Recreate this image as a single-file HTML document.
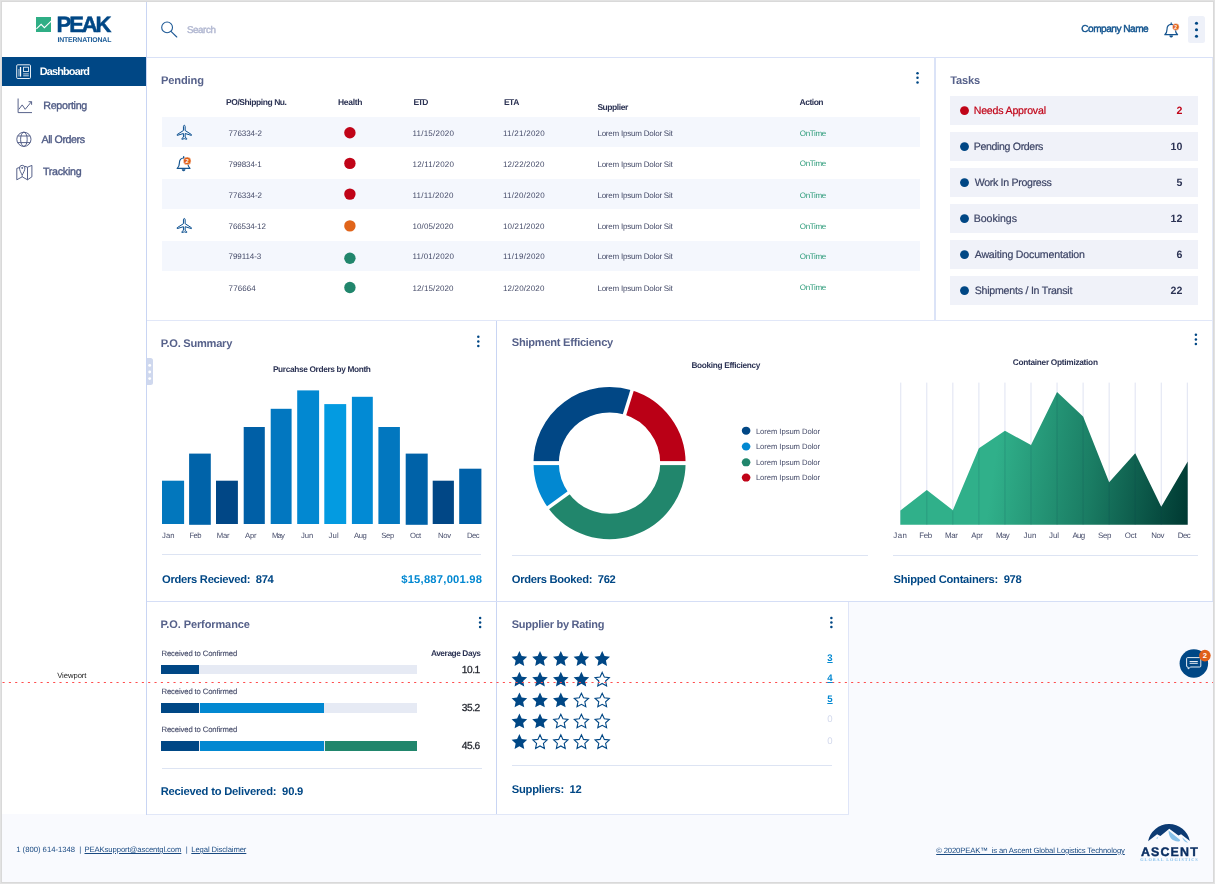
<!DOCTYPE html>
<html lang="en">
<head>
<meta charset="utf-8">
<title>PEAK International Dashboard</title>
<style>
*{box-sizing:border-box;margin:0;padding:0}
html,body{width:1215px;height:884px;overflow:hidden}
body{background:#e2e2e2;font-family:"Liberation Sans",sans-serif;color:#39405f;position:relative}
.a{position:absolute}
.t{position:absolute;white-space:pre;line-height:1;text-rendering:geometricPrecision}
#app{position:absolute;left:2px;top:2px;width:1211px;height:880px;background:#f9fafe;overflow:hidden;box-shadow:0 0 0 1px #d9d9d9}
svg{overflow:visible}
#tx{position:absolute;left:0;top:0;width:1211px;height:880px;will-change:transform}
</style>
</head>
<body>
<div id="app">

<div class="a" style="left:0px;top:0px;width:145px;height:812px;background:#fff;"></div>
<div class="a" style="left:145px;top:0px;width:1066px;height:55px;background:#fff;"></div>
<div class="a" style="left:145px;top:56px;width:1066px;height:544px;background:#fff;"></div>
<div class="a" style="left:145px;top:600px;width:701px;height:212px;background:#fff;"></div>
<div class="a" style="left:144px;top:0px;width:1px;height:813px;background:#c9d5f3;"></div>
<div class="a" style="left:494px;top:319px;width:1px;height:494px;background:#c9d5f3;"></div>
<div class="a" style="left:932px;top:56px;width:2px;height:263px;background:#dbe3f7;"></div>
<div class="a" style="left:846px;top:600px;width:1px;height:213px;background:#dfe5f8;"></div>
<div class="a" style="left:1210px;top:56px;width:1px;height:544px;background:#e3e9f9;"></div>
<div class="a" style="left:145px;top:55px;width:1066px;height:1px;background:#d9e1f7;"></div>
<div class="a" style="left:145px;top:318px;width:1066px;height:1px;background:#e1e7f8;"></div>
<div class="a" style="left:145px;top:599px;width:1066px;height:1px;background:#d5def6;"></div>
<div class="a" style="left:145px;top:812px;width:702px;height:1px;background:#e1e7f8;"></div>
<div class="a" style="left:34.4px;top:15px;width:15px;height:15.4px;background:#2fae85;"></div>
<svg class="a" style="left:-2px;top:-2px;" width="1215" height="884" viewBox="0 0 1215 884"><polyline points="36.4,28.8 41.1,24.3 44.4,27.7 51.4,20.9" fill="none" stroke="#fff" stroke-width="1.1"/></svg>
<div class="a" style="left:0px;top:55.4px;width:144px;height:28.6px;background:#004785;"></div>
<svg class="a" style="left:-2px;top:-2px;" width="1215" height="884" viewBox="0 0 1215 884"><g fill="none" stroke="#fff" stroke-width="0.9"><rect x="16.7" y="64.8" width="13.8" height="13.7" rx="1"/><rect x="23.6" y="67.2" width="4.8" height="4.4" stroke-width="0.8"/><path d="M23.2 73.9h5.6M23.2 75.8h5.6" stroke-width="0.8"/><path d="M20.5 67v9.6" stroke-width="1.3"/><path d="M18.9 69v7.6" stroke-width="1.1" stroke-opacity="0.6"/></g><g fill="none" stroke="#4e5a84" stroke-width="0.95"><path d="M18.1 98.5v14.1h13.9"/><path d="M18.8 109.4l3.4-4.5 3 4.4 6.2-7.5"/><path d="M28.6 101.7h3v3.1"/></g><g fill="none" stroke="#4e5a84" stroke-width="0.95"><circle cx="23.9" cy="139.3" r="7.1"/><ellipse cx="23.9" cy="139.3" rx="3.3" ry="7.1"/><path d="M17.6 136h12.6M17.6 142.6h12.6"/></g><g fill="none" stroke="#4e5a84" stroke-width="0.95" stroke-linejoin="round"><path d="M19.4 167.5l-2.6 0.9v11.4l5.4-3 5.3 3 4.4-3v-11.4l-4.4 1.8l-2.5-0.9"/><path d="M27.5 167.2v12.6M22.2 175.4v1.4"/><path d="M22.2 175.2c-1.2-2.6-2.7-4.9-2.7-7.2a2.7 2.7 0 0 1 5.4 0c0 2.3-1.5 4.6-2.7 7.2z"/><circle cx="22.2" cy="167.9" r="0.5" fill="#4e5a84"/></g></svg>
<svg class="a" style="left:-2px;top:-2px;" width="1215" height="884" viewBox="0 0 1215 884"><g fill="none" stroke="#1f5a96" stroke-width="1.1"><circle cx="167.1" cy="27.4" r="5.4"/><path d="M171 31.3l5.8 5.7" stroke-linecap="round"/></g></svg>
<div class="a" style="left:1185.6px;top:14.4px;width:17.6px;height:26.2px;background:#eef1f9;border-radius:2.5px"></div>
<svg class="a" style="left:-2px;top:-2px;" width="1215" height="884" viewBox="0 0 1215 884"><g fill="#004785"><circle cx="1196.5" cy="23.3" r="1.55"/><circle cx="1196.5" cy="29.8" r="1.55"/><circle cx="1196.5" cy="36.3" r="1.55"/></g></svg>
<svg class="a" style="left:-2px;top:-2px;" width="1215" height="884" viewBox="0 0 1215 884"><g transform="translate(1171.2 29.6) scale(1.0)" fill="none" stroke="#15548f" stroke-width="1.2"><path d="M-6.4 5.1c1.6-1.3 2.2-3 2.2-5.3c0-3 1.6-5.1 4.2-5.1s4.2 2.1 4.2 5.1c0 2.3 0.6 4 2.2 5.3z" stroke-linejoin="round"/><path d="M-1.5 6.1a1.5 1.5 0 0 0 3 0z" fill="#15548f" stroke-width="0.6"/><path d="M0 -5.4v-1.3" stroke-linecap="round"/><circle cx="4.6" cy="-2.7" r="3.4" fill="#e0601a" stroke="#fff" stroke-width="0.5"/><text x="4.6" y="-0.9320000000000002" font-family="Liberation Sans, sans-serif" font-size="5.1" font-weight="bold" fill="#fff" stroke="none" text-anchor="middle">2</text></g></svg>
<svg class="a" style="left:-2px;top:-2px;" width="1215" height="884" viewBox="0 0 1215 884"><g fill="#004785"><circle cx="917.5" cy="73.2" r="1.25"/><circle cx="917.5" cy="77.8" r="1.25"/><circle cx="917.5" cy="82.4" r="1.25"/></g></svg>
<div class="a" style="left:159.9px;top:114.7px;width:757.7px;height:30.1px;background:#f4f7fd;"></div>
<div class="a" style="left:159.9px;top:176.7px;width:757.7px;height:30.5px;background:#f4f7fd;"></div>
<div class="a" style="left:159.9px;top:238.7px;width:757.7px;height:30.7px;background:#f4f7fd;"></div>
<svg class="a" style="left:-2px;top:-2px;" width="1215" height="884" viewBox="0 0 1215 884"><circle cx="349.9" cy="132.7" r="5.7" fill="#c00418"/><circle cx="349.9" cy="163.4" r="5.7" fill="#c00418"/><circle cx="349.9" cy="194.1" r="5.7" fill="#c00418"/><circle cx="349.9" cy="225.9" r="5.7" fill="#e0641a"/><circle cx="349.9" cy="258.3" r="5.7" fill="#21866c"/><circle cx="349.9" cy="287.5" r="5.7" fill="#21866c"/></svg>
<svg class="a" style="left:-2px;top:-2px;" width="1215" height="884" viewBox="0 0 1215 884"><path d="M184.3 125.3c-0.65 0 -0.85 0.6 -0.85 1.3v3.9l-6.25 4v0.9l6.25-1.9v3.7l-1.55 1.2v0.9l2.4-0.65l2.4 0.65v-0.9l-1.55-1.2v-3.7l6.25 1.9v-0.9l-6.25-4v-3.9c0-0.7-0.2-1.3-0.85-1.3z" fill="none" stroke="#0a4f90" stroke-width="1.0" stroke-linejoin="round"/><path d="M184.3 218.5c-0.65 0 -0.85 0.6 -0.85 1.3v3.9l-6.25 4v0.9l6.25-1.9v3.7l-1.55 1.2v0.9l2.4-0.65l2.4 0.65v-0.9l-1.55-1.2v-3.7l6.25 1.9v-0.9l-6.25-4v-3.9c0-0.7-0.2-1.3-0.85-1.3z" fill="none" stroke="#0a4f90" stroke-width="1.0" stroke-linejoin="round"/><g transform="translate(183.6 163.3) scale(1.0)" fill="none" stroke="#15548f" stroke-width="1.2"><path d="M-6.4 5.1c1.6-1.3 2.2-3 2.2-5.3c0-3 1.6-5.1 4.2-5.1s4.2 2.1 4.2 5.1c0 2.3 0.6 4 2.2 5.3z" stroke-linejoin="round"/><path d="M-1.5 6.1a1.5 1.5 0 0 0 3 0z" fill="#15548f" stroke-width="0.6"/><path d="M0 -5.4v-1.3" stroke-linecap="round"/><circle cx="3.6" cy="-2.4" r="3.9" fill="#e0601a" stroke="#fff" stroke-width="0.5"/><text x="3.6" y="-0.3719999999999999" font-family="Liberation Sans, sans-serif" font-size="5.85" font-weight="bold" fill="#fff" stroke="none" text-anchor="middle">2</text></g></svg>
<div class="a" style="left:947.9px;top:94px;width:247.9px;height:29px;background:#f0f2f9;"></div>
<div class="a" style="left:947.9px;top:130px;width:247.9px;height:29px;background:#f0f2f9;"></div>
<div class="a" style="left:947.9px;top:166px;width:247.9px;height:29px;background:#f0f2f9;"></div>
<div class="a" style="left:947.9px;top:202px;width:247.9px;height:29px;background:#f0f2f9;"></div>
<div class="a" style="left:947.9px;top:238px;width:247.9px;height:29px;background:#f0f2f9;"></div>
<div class="a" style="left:947.9px;top:274px;width:247.9px;height:29px;background:#f0f2f9;"></div>
<svg class="a" style="left:-2px;top:-2px;" width="1215" height="884" viewBox="0 0 1215 884"><circle cx="964.5" cy="110.6" r="4.45" fill="#c00418"/><circle cx="964.5" cy="146.6" r="4.45" fill="#004785"/><circle cx="964.5" cy="182.6" r="4.45" fill="#004785"/><circle cx="964.5" cy="218.6" r="4.45" fill="#004785"/><circle cx="964.5" cy="254.6" r="4.45" fill="#004785"/><circle cx="964.5" cy="290.6" r="4.45" fill="#004785"/></svg>
<svg class="a" style="left:-2px;top:-2px;" width="1215" height="884" viewBox="0 0 1215 884"><g fill="#004785"><circle cx="478.3" cy="336.8" r="1.25"/><circle cx="478.3" cy="341.4" r="1.25"/><circle cx="478.3" cy="346.0" r="1.25"/></g></svg>
<div class="a" style="left:145px;top:356.3px;width:5.9px;height:27.1px;background:#cfd8ee;border-radius:0 2.5px 2.5px 0"></div>
<svg class="a" style="left:-2px;top:-2px;" width="1215" height="884" viewBox="0 0 1215 884"><g fill="#fff"><circle cx="149.7" cy="365.4" r="1.45"/><circle cx="149.7" cy="372" r="1.45"/><circle cx="149.7" cy="378.6" r="1.45"/></g></svg>
<svg class="a" style="left:-2px;top:-2px;" width="1215" height="884" viewBox="0 0 1215 884"><rect x="162.0" y="480.7" width="22.1" height="43.3" fill="#0277bd"/><rect x="189.1" y="453.6" width="21.7" height="71.2" fill="#0063a9"/><rect x="216.0" y="480.7" width="21.9" height="43.3" fill="#014786"/><rect x="243.7" y="427.0" width="21.1" height="97.0" fill="#005fa6"/><rect x="270.7" y="408.8" width="20.9" height="115.2" fill="#0277c0"/><rect x="297.2" y="390.4" width="21.9" height="133.6" fill="#0288d1"/><rect x="324.3" y="404.1" width="21.9" height="119.9" fill="#039be1"/><rect x="351.9" y="396.8" width="20.9" height="127.2" fill="#028ad4"/><rect x="378.4" y="427.0" width="21.5" height="97.0" fill="#0277bf"/><rect x="405.7" y="453.6" width="22.0" height="71.2" fill="#0062a8"/><rect x="432.7" y="480.7" width="21.2" height="43.3" fill="#014786"/><rect x="459.2" y="468.7" width="22.2" height="55.3" fill="#0061a9"/></svg>
<div class="a" style="left:159.5px;top:552.3px;width:319.9px;height:1px;background:#dde4f3;"></div>
<svg class="a" style="left:-2px;top:-2px;" width="1215" height="884" viewBox="0 0 1215 884"><g fill="#004785"><circle cx="1195.9" cy="334.8" r="1.25"/><circle cx="1195.9" cy="339.4" r="1.25"/><circle cx="1195.9" cy="344.0" r="1.25"/></g></svg>
<svg class="a" style="left:-2px;top:-2px;" width="1215" height="884" viewBox="0 0 1215 884"><path d="M546.17 463.10 A63.375 63.375 0 0 1 628.08 402.49" fill="none" stroke="#014785" stroke-width="25.35"/><path d="M628.08 402.49 A63.375 63.375 0 0 1 672.92 463.10" fill="none" stroke="#ba0016" stroke-width="25.35"/><path d="M672.92 463.10 A63.375 63.375 0 0 1 558.28 500.35" fill="none" stroke="#21866c" stroke-width="25.35"/><path d="M558.28 500.35 A63.375 63.375 0 0 1 546.17 463.10" fill="none" stroke="#0288d1" stroke-width="25.35"/><line x1="623.95" y1="416.58" x2="632.63" y2="388.54" stroke="#fff" stroke-width="3.5"/><line x1="658.25" y1="463.10" x2="687.60" y2="463.10" stroke="#fff" stroke-width="4.0"/><line x1="570.15" y1="491.73" x2="546.41" y2="508.98" stroke="#fff" stroke-width="3.5"/><line x1="560.85" y1="463.10" x2="531.50" y2="463.10" stroke="#fff" stroke-width="4.0"/></svg>
<svg class="a" style="left:-2px;top:-2px;" width="1215" height="884" viewBox="0 0 1215 884"><ellipse cx="746.1" cy="430.7" rx="4.3" ry="4.0" fill="#014785"/><ellipse cx="746.1" cy="446.5" rx="4.3" ry="4.0" fill="#0288d1"/><ellipse cx="746.1" cy="462.3" rx="4.3" ry="4.0" fill="#21866c"/><ellipse cx="746.1" cy="477.6" rx="4.3" ry="4.0" fill="#c00418"/></svg>
<div class="a" style="left:509.8px;top:552.8px;width:356.3px;height:1px;background:#dde4f3;"></div>
<svg class="a" style="left:-2px;top:-2px;" width="1215" height="884" viewBox="0 0 1215 884"><defs><linearGradient id="cg" gradientUnits="userSpaceOnUse" x1="996" y1="452" x2="1192" y2="480"><stop offset="0" stop-color="#30b08a"/><stop offset="0.5" stop-color="#1a7c63"/><stop offset="1" stop-color="#003a33"/></linearGradient></defs><line x1="900.75" y1="382.6" x2="900.75" y2="524.7" stroke="#dfe3f2" stroke-width="1"/><line x1="926.80" y1="382.6" x2="926.80" y2="524.7" stroke="#dfe3f2" stroke-width="1"/><line x1="952.85" y1="382.6" x2="952.85" y2="524.7" stroke="#dfe3f2" stroke-width="1"/><line x1="978.90" y1="382.6" x2="978.90" y2="524.7" stroke="#dfe3f2" stroke-width="1"/><line x1="1004.95" y1="382.6" x2="1004.95" y2="524.7" stroke="#dfe3f2" stroke-width="1"/><line x1="1031.00" y1="382.6" x2="1031.00" y2="524.7" stroke="#dfe3f2" stroke-width="1"/><line x1="1057.05" y1="382.6" x2="1057.05" y2="524.7" stroke="#dfe3f2" stroke-width="1"/><line x1="1083.10" y1="382.6" x2="1083.10" y2="524.7" stroke="#dfe3f2" stroke-width="1"/><line x1="1109.15" y1="382.6" x2="1109.15" y2="524.7" stroke="#dfe3f2" stroke-width="1"/><line x1="1135.20" y1="382.6" x2="1135.20" y2="524.7" stroke="#dfe3f2" stroke-width="1"/><line x1="1161.25" y1="382.6" x2="1161.25" y2="524.7" stroke="#dfe3f2" stroke-width="1"/><line x1="1187.30" y1="382.6" x2="1187.30" y2="524.7" stroke="#dfe3f2" stroke-width="1"/><polygon points="900.35,524.7 900.35,510.5 900.75,510.2 926.80,489.9 952.85,510.2 978.90,448.3 1004.95,430.7 1031.00,445.1 1057.05,392.1 1083.10,416.5 1109.15,482.3 1135.20,453.2 1161.25,506.7 1187.30,462.2 1187.70,461.6 1187.70,524.7" fill="url(#cg)"/><line x1="926.80" y1="490.9" x2="926.80" y2="524.7" stroke="#0a3a4a" stroke-opacity="0.18" stroke-width="0.9"/><line x1="952.85" y1="511.2" x2="952.85" y2="524.7" stroke="#0a3a4a" stroke-opacity="0.18" stroke-width="0.9"/><line x1="978.90" y1="449.3" x2="978.90" y2="524.7" stroke="#0a3a4a" stroke-opacity="0.18" stroke-width="0.9"/><line x1="1004.95" y1="431.7" x2="1004.95" y2="524.7" stroke="#0a3a4a" stroke-opacity="0.18" stroke-width="0.9"/><line x1="1031.00" y1="446.1" x2="1031.00" y2="524.7" stroke="#0a3a4a" stroke-opacity="0.18" stroke-width="0.9"/><line x1="1057.05" y1="393.1" x2="1057.05" y2="524.7" stroke="#0a3a4a" stroke-opacity="0.18" stroke-width="0.9"/><line x1="1083.10" y1="417.5" x2="1083.10" y2="524.7" stroke="#0a3a4a" stroke-opacity="0.18" stroke-width="0.9"/><line x1="1109.15" y1="483.3" x2="1109.15" y2="524.7" stroke="#0a3a4a" stroke-opacity="0.18" stroke-width="0.9"/><line x1="1135.20" y1="454.2" x2="1135.20" y2="524.7" stroke="#0a3a4a" stroke-opacity="0.18" stroke-width="0.9"/><line x1="1161.25" y1="507.7" x2="1161.25" y2="524.7" stroke="#0a3a4a" stroke-opacity="0.18" stroke-width="0.9"/></svg>
<div class="a" style="left:891.3px;top:552.8px;width:304.5px;height:1px;background:#dde4f3;"></div>
<svg class="a" style="left:-2px;top:-2px;" width="1215" height="884" viewBox="0 0 1215 884"><g fill="#004785"><circle cx="480.1" cy="618.1" r="1.25"/><circle cx="480.1" cy="622.5" r="1.25"/><circle cx="480.1" cy="627.0" r="1.25"/></g></svg>
<div class="a" style="left:159.4px;top:662.7px;width:255.7px;height:9.8px;background:#e6eaf4;"></div>
<div class="a" style="left:159.4px;top:662.7px;width:37.2px;height:9.8px;background:#004785;"></div>
<div class="a" style="left:159.4px;top:701.2px;width:255.7px;height:9.8px;background:#e6eaf4;"></div>
<div class="a" style="left:159.4px;top:701.2px;width:37.2px;height:9.8px;background:#004785;"></div>
<div class="a" style="left:198.0px;top:701.2px;width:123.8px;height:9.8px;background:#0288d1;"></div>
<div class="a" style="left:159.4px;top:738.9px;width:255.7px;height:9.8px;background:#e6eaf4;"></div>
<div class="a" style="left:159.4px;top:738.9px;width:37.2px;height:9.8px;background:#004785;"></div>
<div class="a" style="left:198.0px;top:738.9px;width:123.8px;height:9.8px;background:#0288d1;"></div>
<div class="a" style="left:323.2px;top:738.9px;width:91.9px;height:9.8px;background:#21866c;"></div>
<div class="a" style="left:159.7px;top:766px;width:320.5px;height:1px;background:#dde4f3;"></div>
<svg class="a" style="left:-2px;top:-2px;" width="1215" height="884" viewBox="0 0 1215 884"><g fill="#004785"><circle cx="831.4" cy="618.1" r="1.25"/><circle cx="831.4" cy="622.6" r="1.25"/><circle cx="831.4" cy="627.1" r="1.25"/></g></svg>
<svg class="a" style="left:-2px;top:-2px;" width="1215" height="884" viewBox="0 0 1215 884"><polygon points="519.40,651.10 521.71,656.12 527.20,656.77 523.14,660.52 524.22,665.93 519.40,663.24 514.58,665.93 515.66,660.52 511.60,656.77 517.09,656.12" fill="#004785"/><polygon points="540.00,651.10 542.31,656.12 547.80,656.77 543.74,660.52 544.82,665.93 540.00,663.24 535.18,665.93 536.26,660.52 532.20,656.77 537.69,656.12" fill="#004785"/><polygon points="560.80,651.10 563.11,656.12 568.60,656.77 564.54,660.52 565.62,665.93 560.80,663.24 555.98,665.93 557.06,660.52 553.00,656.77 558.49,656.12" fill="#004785"/><polygon points="581.40,651.10 583.71,656.12 589.20,656.77 585.14,660.52 586.22,665.93 581.40,663.24 576.58,665.93 577.66,660.52 573.60,656.77 579.09,656.12" fill="#004785"/><polygon points="602.20,651.10 604.51,656.12 610.00,656.77 605.94,660.52 607.02,665.93 602.20,663.24 597.38,665.93 598.46,660.52 594.40,656.77 599.89,656.12" fill="#004785"/><polygon points="519.40,671.70 521.71,676.72 527.20,677.37 523.14,681.12 524.22,686.53 519.40,683.84 514.58,686.53 515.66,681.12 511.60,677.37 517.09,676.72" fill="#004785"/><polygon points="540.00,671.70 542.31,676.72 547.80,677.37 543.74,681.12 544.82,686.53 540.00,683.84 535.18,686.53 536.26,681.12 532.20,677.37 537.69,676.72" fill="#004785"/><polygon points="560.80,671.70 563.11,676.72 568.60,677.37 564.54,681.12 565.62,686.53 560.80,683.84 555.98,686.53 557.06,681.12 553.00,677.37 558.49,676.72" fill="#004785"/><polygon points="581.40,671.70 583.71,676.72 589.20,677.37 585.14,681.12 586.22,686.53 581.40,683.84 576.58,686.53 577.66,681.12 573.60,677.37 579.09,676.72" fill="#004785"/><polygon points="602.20,672.40 604.32,676.99 609.33,677.58 605.62,681.01 606.61,685.97 602.20,683.50 597.79,685.97 598.78,681.01 595.07,677.58 600.08,676.99" fill="#fff" stroke="#004785" stroke-width="1.1" stroke-linejoin="miter"/><polygon points="519.40,692.50 521.71,697.52 527.20,698.17 523.14,701.92 524.22,707.33 519.40,704.64 514.58,707.33 515.66,701.92 511.60,698.17 517.09,697.52" fill="#004785"/><polygon points="540.00,692.50 542.31,697.52 547.80,698.17 543.74,701.92 544.82,707.33 540.00,704.64 535.18,707.33 536.26,701.92 532.20,698.17 537.69,697.52" fill="#004785"/><polygon points="560.80,692.50 563.11,697.52 568.60,698.17 564.54,701.92 565.62,707.33 560.80,704.64 555.98,707.33 557.06,701.92 553.00,698.17 558.49,697.52" fill="#004785"/><polygon points="581.40,693.20 583.52,697.79 588.53,698.38 584.82,701.81 585.81,706.77 581.40,704.30 576.99,706.77 577.98,701.81 574.27,698.38 579.28,697.79" fill="#fff" stroke="#004785" stroke-width="1.1" stroke-linejoin="miter"/><polygon points="602.20,693.20 604.32,697.79 609.33,698.38 605.62,701.81 606.61,706.77 602.20,704.30 597.79,706.77 598.78,701.81 595.07,698.38 600.08,697.79" fill="#fff" stroke="#004785" stroke-width="1.1" stroke-linejoin="miter"/><polygon points="519.40,713.50 521.71,718.52 527.20,719.17 523.14,722.92 524.22,728.33 519.40,725.64 514.58,728.33 515.66,722.92 511.60,719.17 517.09,718.52" fill="#004785"/><polygon points="540.00,713.50 542.31,718.52 547.80,719.17 543.74,722.92 544.82,728.33 540.00,725.64 535.18,728.33 536.26,722.92 532.20,719.17 537.69,718.52" fill="#004785"/><polygon points="560.80,714.20 562.92,718.79 567.93,719.38 564.22,722.81 565.21,727.77 560.80,725.30 556.39,727.77 557.38,722.81 553.67,719.38 558.68,718.79" fill="#fff" stroke="#004785" stroke-width="1.1" stroke-linejoin="miter"/><polygon points="581.40,714.20 583.52,718.79 588.53,719.38 584.82,722.81 585.81,727.77 581.40,725.30 576.99,727.77 577.98,722.81 574.27,719.38 579.28,718.79" fill="#fff" stroke="#004785" stroke-width="1.1" stroke-linejoin="miter"/><polygon points="602.20,714.20 604.32,718.79 609.33,719.38 605.62,722.81 606.61,727.77 602.20,725.30 597.79,727.77 598.78,722.81 595.07,719.38 600.08,718.79" fill="#fff" stroke="#004785" stroke-width="1.1" stroke-linejoin="miter"/><polygon points="519.40,734.10 521.71,739.12 527.20,739.77 523.14,743.52 524.22,748.93 519.40,746.24 514.58,748.93 515.66,743.52 511.60,739.77 517.09,739.12" fill="#004785"/><polygon points="540.00,734.80 542.12,739.39 547.13,739.98 543.42,743.41 544.41,748.37 540.00,745.90 535.59,748.37 536.58,743.41 532.87,739.98 537.88,739.39" fill="#fff" stroke="#004785" stroke-width="1.1" stroke-linejoin="miter"/><polygon points="560.80,734.80 562.92,739.39 567.93,739.98 564.22,743.41 565.21,748.37 560.80,745.90 556.39,748.37 557.38,743.41 553.67,739.98 558.68,739.39" fill="#fff" stroke="#004785" stroke-width="1.1" stroke-linejoin="miter"/><polygon points="581.40,734.80 583.52,739.39 588.53,739.98 584.82,743.41 585.81,748.37 581.40,745.90 576.99,748.37 577.98,743.41 574.27,739.98 579.28,739.39" fill="#fff" stroke="#004785" stroke-width="1.1" stroke-linejoin="miter"/><polygon points="602.20,734.80 604.32,739.39 609.33,739.98 605.62,743.41 606.61,748.37 602.20,745.90 597.79,748.37 598.78,743.41 595.07,739.98 600.08,739.39" fill="#fff" stroke="#004785" stroke-width="1.1" stroke-linejoin="miter"/></svg>
<div class="a" style="left:509.8px;top:763.2px;width:320.5px;height:1px;background:#dde4f3;"></div>
<svg class="a" style="left:-2px;top:-2px;" width="1215" height="884" viewBox="0 0 1215 884"><path d="M1148.1 841.3A21.3 21.3 0 0 1 1189.9 841.1L1181.1 834.3L1178.4 835.5L1169.3 828.7L1160.4 836.1L1157.1 834.3Z" fill="#0c3a73"/><path d="M1168.6 830.6L1179.6 839.6C1180.4 840.3 1180.3 841.3 1179 841.4C1172.5 841.8 1168.4 837.5 1168.6 830.6Z" fill="#86c0e9"/><path d="M1182.2 837.2L1188.2 842.8C1185.5 842.4 1183.2 840.6 1182.2 837.2Z" fill="#86c0e9"/><path d="M1156.3 838.2L1158.4 836.4L1157.2 838.9Z" fill="#86c0e9"/></svg>
<svg class="a" style="left:-2px;top:-2px;" width="1215" height="884" viewBox="0 0 1215 884"><line x1="2.5" y1="682.5" x2="1213" y2="682.5" stroke="#ff4d4d" stroke-width="1.1" stroke-dasharray="2.1 4.233"/></svg>
<svg class="a" style="left:-2px;top:-2px;" width="1215" height="884" viewBox="0 0 1215 884"><circle cx="1193.85" cy="663.5" r="14.25" fill="#004785"/><g fill="none" stroke="#fff" stroke-width="0.9" stroke-linejoin="round"><path d="M1187.6 657.6h12.2a1 1 0 0 1 1 1v7.4a1 1 0 0 1 -1 1h-9.1l-2.5 1.9v-1.9h-0.6a1 1 0 0 1 -1 -1v-7.4a1 1 0 0 1 1 -1z"/><path d="M1189.6 661.5h8.2M1189.6 663.3h8.2"/></g><circle cx="1204.9" cy="655.6" r="5.8" fill="#e0601a"/><text x="1204.9" y="658.3" font-family="Liberation Sans, sans-serif" font-size="7.6" font-weight="bold" fill="#fff" text-anchor="middle">2</text></svg>

<div id="tx">
<div class="t" style="left:54.60px;top:12px;font-size:22.1px;color:#004785;font-weight:bold;letter-spacing:-2.167px;-webkit-text-stroke:0.5px #004785;">PEAK</div>
<div class="t" style="left:55.40px;top:36px;font-size:6.9px;color:#1a5a96;font-weight:bold;letter-spacing:-0.150px;">INTERNATIONAL</div>
<div class="t" style="left:37.70px;top:65px;font-size:10.9px;color:#fff;font-weight:bold;letter-spacing:-0.825px;">Dashboard</div>
<div class="t" style="left:41.30px;top:99px;font-size:10.7px;color:#4e5a84;letter-spacing:-0.300px;-webkit-text-stroke:0.35px #4e5a84;">Reporting</div>
<div class="t" style="left:39.50px;top:133px;font-size:10.7px;color:#4e5a84;letter-spacing:-0.444px;-webkit-text-stroke:0.35px #4e5a84;">All Orders</div>
<div class="t" style="left:41.00px;top:165px;font-size:10.7px;color:#4e5a84;letter-spacing:-0.286px;-webkit-text-stroke:0.35px #4e5a84;">Tracking</div>
<div class="t" style="left:185.00px;top:24px;font-size:9.8px;color:#b3b9d2;letter-spacing:-0.440px;-webkit-text-stroke:0.45px #b3b9d2;">Search</div>
<div class="t" style="left:1079.30px;top:23px;font-size:10.1px;color:#14558f;letter-spacing:-0.500px;-webkit-text-stroke:0.45px #14558f;">Company Name</div>
<div class="t" style="left:158.90px;top:74px;font-size:11.1px;color:#56618a;font-weight:bold;letter-spacing:-0.100px;">Pending</div>
<div class="t" style="left:224.00px;top:96px;font-size:8.5px;color:#2c3354;font-weight:bold;letter-spacing:-0.436px;">PO/Shipping Nu.</div>
<div class="t" style="left:336.00px;top:96px;font-size:8.5px;color:#2c3354;font-weight:bold;letter-spacing:-0.320px;">Health</div>
<div class="t" style="left:411.50px;top:96px;font-size:8.5px;color:#2c3354;font-weight:bold;letter-spacing:-1.100px;">ETD</div>
<div class="t" style="left:502.00px;top:96px;font-size:8.5px;color:#2c3354;font-weight:bold;letter-spacing:-0.550px;">ETA</div>
<div class="t" style="left:595.40px;top:101px;font-size:8.5px;color:#2c3354;font-weight:bold;letter-spacing:-0.443px;">Supplier</div>
<div class="t" style="left:797.50px;top:96px;font-size:8.5px;color:#2c3354;font-weight:bold;letter-spacing:-0.480px;">Action</div>
<div class="t" style="left:226.60px;top:128px;font-size:8.0px;color:#444a68;letter-spacing:-0.057px;">776334-2</div>
<div class="t" style="left:410.50px;top:128px;font-size:8.0px;color:#444a68;letter-spacing:0.222px;">11/15/2020</div>
<div class="t" style="left:501.00px;top:128px;font-size:8.0px;color:#444a68;letter-spacing:0.256px;">11/21/2020</div>
<div class="t" style="left:595.40px;top:128px;font-size:8.0px;color:#444a68;letter-spacing:-0.210px;">Lorem Ipsum Dolor Sit</div>
<div class="t" style="left:797.80px;top:128px;font-size:8.0px;color:#2a9a78;letter-spacing:-0.340px;">OnTime</div>
<div class="t" style="left:226.60px;top:159px;font-size:8.0px;color:#444a68;letter-spacing:-0.086px;">799834-1</div>
<div class="t" style="left:410.50px;top:159px;font-size:8.0px;color:#444a68;letter-spacing:0.222px;">12/11/2020</div>
<div class="t" style="left:501.00px;top:159px;font-size:8.0px;color:#444a68;letter-spacing:0.144px;">12/22/2020</div>
<div class="t" style="left:595.40px;top:159px;font-size:8.0px;color:#444a68;letter-spacing:-0.210px;">Lorem Ipsum Dolor Sit</div>
<div class="t" style="left:797.80px;top:158px;font-size:8.0px;color:#2a9a78;letter-spacing:-0.340px;">OnTime</div>
<div class="t" style="left:226.60px;top:190px;font-size:8.0px;color:#444a68;letter-spacing:-0.057px;">776334-2</div>
<div class="t" style="left:410.50px;top:190px;font-size:8.0px;color:#444a68;letter-spacing:0.222px;">11/11/2020</div>
<div class="t" style="left:501.00px;top:190px;font-size:8.0px;color:#444a68;letter-spacing:0.256px;">11/20/2020</div>
<div class="t" style="left:595.40px;top:190px;font-size:8.0px;color:#444a68;letter-spacing:-0.210px;">Lorem Ipsum Dolor Sit</div>
<div class="t" style="left:797.80px;top:190px;font-size:8.0px;color:#2a9a78;letter-spacing:-0.340px;">OnTime</div>
<div class="t" style="left:226.60px;top:221px;font-size:8.0px;color:#444a68;letter-spacing:-0.125px;">766534-12</div>
<div class="t" style="left:410.50px;top:221px;font-size:8.0px;color:#444a68;letter-spacing:0.111px;">10/05/2020</div>
<div class="t" style="left:501.00px;top:221px;font-size:8.0px;color:#444a68;letter-spacing:0.144px;">10/21/2020</div>
<div class="t" style="left:595.40px;top:221px;font-size:8.0px;color:#444a68;letter-spacing:-0.210px;">Lorem Ipsum Dolor Sit</div>
<div class="t" style="left:797.80px;top:221px;font-size:8.0px;color:#2a9a78;letter-spacing:-0.340px;">OnTime</div>
<div class="t" style="left:226.60px;top:251px;font-size:8.0px;color:#444a68;letter-spacing:-0.086px;">799114-3</div>
<div class="t" style="left:410.50px;top:251px;font-size:8.0px;color:#444a68;letter-spacing:0.222px;">11/01/2020</div>
<div class="t" style="left:501.00px;top:251px;font-size:8.0px;color:#444a68;letter-spacing:0.256px;">11/19/2020</div>
<div class="t" style="left:595.40px;top:251px;font-size:8.0px;color:#444a68;letter-spacing:-0.210px;">Lorem Ipsum Dolor Sit</div>
<div class="t" style="left:797.80px;top:251px;font-size:8.0px;color:#2a9a78;letter-spacing:-0.340px;">OnTime</div>
<div class="t" style="left:226.60px;top:283px;font-size:8.0px;color:#444a68;letter-spacing:0.100px;">776664</div>
<div class="t" style="left:410.50px;top:283px;font-size:8.0px;color:#444a68;letter-spacing:0.111px;">12/15/2020</div>
<div class="t" style="left:501.00px;top:283px;font-size:8.0px;color:#444a68;letter-spacing:0.144px;">12/20/2020</div>
<div class="t" style="left:595.40px;top:283px;font-size:8.0px;color:#444a68;letter-spacing:-0.210px;">Lorem Ipsum Dolor Sit</div>
<div class="t" style="left:797.80px;top:282px;font-size:8.0px;color:#2a9a78;letter-spacing:-0.340px;">OnTime</div>
<div class="t" style="left:948.20px;top:74px;font-size:11.1px;color:#56618a;font-weight:bold;letter-spacing:-0.150px;">Tasks</div>
<div class="t" style="left:971.70px;top:104px;font-size:10.6px;color:#c00418;letter-spacing:-0.192px;-webkit-text-stroke:0.2px #c00418;">Needs Approval</div>
<div class="t" style="left:1174.60px;top:104px;font-size:10.6px;color:#c00418;font-weight:bold;">2</div>
<div class="t" style="left:971.70px;top:140px;font-size:10.6px;color:#3d4566;letter-spacing:-0.346px;-webkit-text-stroke:0.2px #3d4566;">Pending Orders</div>
<div class="t" style="left:1168.60px;top:140px;font-size:10.6px;color:#2c3354;font-weight:bold;">10</div>
<div class="t" style="left:972.70px;top:176px;font-size:10.6px;color:#3d4566;letter-spacing:-0.307px;-webkit-text-stroke:0.2px #3d4566;">Work In Progress</div>
<div class="t" style="left:1174.60px;top:176px;font-size:10.6px;color:#2c3354;font-weight:bold;">5</div>
<div class="t" style="left:971.70px;top:212px;font-size:10.6px;color:#3d4566;letter-spacing:-0.043px;-webkit-text-stroke:0.2px #3d4566;">Bookings</div>
<div class="t" style="left:1168.60px;top:212px;font-size:10.6px;color:#2c3354;font-weight:bold;">12</div>
<div class="t" style="left:972.70px;top:248px;font-size:10.6px;color:#3d4566;letter-spacing:-0.181px;-webkit-text-stroke:0.2px #3d4566;">Awaiting Documentation</div>
<div class="t" style="left:1174.60px;top:248px;font-size:10.6px;color:#2c3354;font-weight:bold;">6</div>
<div class="t" style="left:972.70px;top:284px;font-size:10.6px;color:#3d4566;letter-spacing:-0.224px;-webkit-text-stroke:0.2px #3d4566;">Shipments / In Transit</div>
<div class="t" style="left:1168.60px;top:284px;font-size:10.6px;color:#2c3354;font-weight:bold;">22</div>
<div class="t" style="left:158.80px;top:337px;font-size:11.1px;color:#56618a;font-weight:bold;letter-spacing:-0.264px;">P.O. Summary</div>
<div class="t" style="left:270.90px;top:363px;font-size:8.3px;color:#2c3354;font-weight:bold;letter-spacing:-0.348px;">Purcahse Orders by Month</div>
<div class="t" style="left:160.10px;top:530px;font-size:7.7px;color:#474d6b;letter-spacing:0.050px;">Jan</div>
<div class="t" style="left:187.50px;top:530px;font-size:7.7px;color:#474d6b;letter-spacing:-0.600px;">Feb</div>
<div class="t" style="left:214.80px;top:530px;font-size:7.7px;color:#474d6b;letter-spacing:-0.300px;">Mar</div>
<div class="t" style="left:243.00px;top:530px;font-size:7.7px;color:#474d6b;letter-spacing:-0.200px;">Apr</div>
<div class="t" style="left:269.90px;top:530px;font-size:7.7px;color:#474d6b;letter-spacing:-0.750px;">May</div>
<div class="t" style="left:299.00px;top:530px;font-size:7.7px;color:#474d6b;">Jun</div>
<div class="t" style="left:326.60px;top:530px;font-size:7.7px;color:#474d6b;letter-spacing:0.100px;">Jul</div>
<div class="t" style="left:352.00px;top:530px;font-size:7.7px;color:#474d6b;letter-spacing:-0.500px;">Aug</div>
<div class="t" style="left:379.20px;top:530px;font-size:7.7px;color:#474d6b;letter-spacing:-0.300px;">Sep</div>
<div class="t" style="left:408.10px;top:530px;font-size:7.7px;color:#474d6b;letter-spacing:-0.500px;">Oct</div>
<div class="t" style="left:436.00px;top:530px;font-size:7.7px;color:#474d6b;letter-spacing:-0.350px;">Nov</div>
<div class="t" style="left:464.90px;top:530px;font-size:7.7px;color:#474d6b;letter-spacing:-0.450px;">Dec</div>
<div class="t" style="left:160.10px;top:573px;font-size:11.2px;color:#004785;font-weight:bold;letter-spacing:-0.290px;">Orders Recieved:  874</div>
<div class="t" style="left:399.20px;top:573px;font-size:11.2px;color:#0288d1;font-weight:bold;letter-spacing:0.238px;">$15,887,001.98</div>
<div class="t" style="left:509.80px;top:336px;font-size:11.1px;color:#56618a;font-weight:bold;letter-spacing:-0.256px;">Shipment Efficiency</div>
<div class="t" style="left:689.40px;top:359px;font-size:8.3px;color:#2c3354;font-weight:bold;letter-spacing:-0.335px;">Booking Efficiency</div>
<div class="t" style="left:753.90px;top:426px;font-size:7.7px;color:#444a68;letter-spacing:-0.075px;">Lorem Ipsum Dolor</div>
<div class="t" style="left:753.90px;top:441px;font-size:7.7px;color:#444a68;letter-spacing:-0.075px;">Lorem Ipsum Dolor</div>
<div class="t" style="left:753.90px;top:457px;font-size:7.7px;color:#444a68;letter-spacing:-0.075px;">Lorem Ipsum Dolor</div>
<div class="t" style="left:753.90px;top:472px;font-size:7.7px;color:#444a68;letter-spacing:-0.075px;">Lorem Ipsum Dolor</div>
<div class="t" style="left:509.80px;top:573px;font-size:11.2px;color:#004785;font-weight:bold;letter-spacing:-0.300px;">Orders Booked:  762</div>
<div class="t" style="left:1010.70px;top:356px;font-size:8.3px;color:#2c3354;font-weight:bold;letter-spacing:-0.286px;">Container Optimization</div>
<div class="t" style="left:891.30px;top:530px;font-size:7.9px;color:#474d6b;letter-spacing:0.450px;">Jan</div>
<div class="t" style="left:917.20px;top:530px;font-size:7.9px;color:#474d6b;letter-spacing:-0.350px;">Feb</div>
<div class="t" style="left:943.00px;top:530px;font-size:7.9px;color:#474d6b;letter-spacing:-0.300px;">Mar</div>
<div class="t" style="left:969.20px;top:530px;font-size:7.9px;color:#474d6b;letter-spacing:-0.300px;">Apr</div>
<div class="t" style="left:994.00px;top:530px;font-size:7.9px;color:#474d6b;letter-spacing:-0.600px;">May</div>
<div class="t" style="left:1021.40px;top:530px;font-size:7.9px;color:#474d6b;letter-spacing:0.150px;">Jun</div>
<div class="t" style="left:1047.00px;top:530px;font-size:7.9px;color:#474d6b;">Jul</div>
<div class="t" style="left:1070.50px;top:530px;font-size:7.9px;color:#474d6b;letter-spacing:-0.650px;">Aug</div>
<div class="t" style="left:1096.00px;top:530px;font-size:7.9px;color:#474d6b;letter-spacing:-0.300px;">Sep</div>
<div class="t" style="left:1122.80px;top:530px;font-size:7.9px;color:#474d6b;letter-spacing:-0.250px;">Oct</div>
<div class="t" style="left:1149.20px;top:530px;font-size:7.9px;color:#474d6b;letter-spacing:-0.350px;">Nov</div>
<div class="t" style="left:1175.80px;top:530px;font-size:7.9px;color:#474d6b;letter-spacing:-0.550px;">Dec</div>
<div class="t" style="left:891.60px;top:573px;font-size:11.2px;color:#004785;font-weight:bold;letter-spacing:-0.265px;">Shipped Containers:  978</div>
<div class="t" style="left:158.50px;top:618px;font-size:11.0px;color:#56618a;font-weight:bold;letter-spacing:-0.100px;">P.O. Performance</div>
<div class="t" style="left:428.90px;top:647px;font-size:8.3px;color:#2c3354;font-weight:bold;letter-spacing:-0.409px;">Average Days</div>
<div class="t" style="left:159.50px;top:648px;font-size:7.7px;color:#444a68;letter-spacing:-0.125px;-webkit-text-stroke:0.12px #444a68;">Received to Confirmed</div>
<div class="t" style="left:459.80px;top:664px;font-size:10.2px;color:#22252e;letter-spacing:-0.467px;-webkit-text-stroke:0.25px #22252e;">10.1</div>
<div class="t" style="left:159.50px;top:686px;font-size:7.7px;color:#444a68;letter-spacing:-0.125px;-webkit-text-stroke:0.12px #444a68;">Received to Confirmed</div>
<div class="t" style="left:459.80px;top:702px;font-size:10.2px;color:#22252e;letter-spacing:-0.467px;-webkit-text-stroke:0.25px #22252e;">35.2</div>
<div class="t" style="left:159.50px;top:724px;font-size:7.7px;color:#444a68;letter-spacing:-0.125px;-webkit-text-stroke:0.12px #444a68;">Received to Confirmed</div>
<div class="t" style="left:459.80px;top:740px;font-size:10.2px;color:#22252e;letter-spacing:-0.467px;-webkit-text-stroke:0.25px #22252e;">45.6</div>
<div class="t" style="left:158.70px;top:785px;font-size:11.2px;color:#004785;font-weight:bold;letter-spacing:-0.200px;">Recieved to Delivered:  90.9</div>
<div class="t" style="left:509.80px;top:618px;font-size:11.0px;color:#56618a;font-weight:bold;letter-spacing:-0.265px;">Supplier by Rating</div>
<div class="t" style="left:825.30px;top:652px;font-size:9.6px;color:#0288d1;font-weight:bold;text-decoration:underline;">3</div>
<div class="t" style="left:825.30px;top:672px;font-size:9.6px;color:#0288d1;font-weight:bold;text-decoration:underline;">4</div>
<div class="t" style="left:825.30px;top:693px;font-size:9.6px;color:#0288d1;font-weight:bold;text-decoration:underline;">5</div>
<div class="t" style="left:825.30px;top:713px;font-size:9.6px;color:#d3d9ec;">0</div>
<div class="t" style="left:825.30px;top:735px;font-size:9.6px;color:#d3d9ec;">0</div>
<div class="t" style="left:509.80px;top:783px;font-size:11.2px;color:#004785;font-weight:bold;letter-spacing:-0.262px;">Suppliers:  12</div>
<div class="t" style="left:14.20px;top:844px;font-size:7.7px;color:#1a4a82;letter-spacing:-0.007px;">1 (800) 614-1348</div>
<div class="t" style="left:77.20px;top:844px;font-size:7.7px;color:#1a4a82;">|</div>
<div class="t" style="left:82.50px;top:844px;font-size:7.7px;color:#1a4a82;letter-spacing:-0.100px;text-decoration:underline;">PEAKsupport@ascentgl.com</div>
<div class="t" style="left:183.80px;top:844px;font-size:7.7px;color:#1a4a82;">|</div>
<div class="t" style="left:189.30px;top:844px;font-size:7.7px;color:#1a4a82;letter-spacing:-0.113px;text-decoration:underline;">Legal Disclaimer</div>
<div class="t" style="left:934.20px;top:845px;font-size:7.7px;color:#1a4a82;letter-spacing:-0.142px;text-decoration:underline;">© 2020PEAK™  is an Ascent Global Logistics Technology</div>
<div class="t" style="left:1138.90px;top:844px;font-size:12.4px;color:#0b2f63;font-weight:bold;letter-spacing:1.180px;-webkit-text-stroke:0.4px #0b2f63;">ASCENT</div>
<div class="t" style="left:1138.30px;top:856px;font-size:4.3px;color:#8ac2ec;font-weight:bold;letter-spacing:0.967px;font-family:'Liberation Serif',serif;">GLOBAL LOGISTICS</div>
<div class="t" style="left:55.20px;top:670px;font-size:7.7px;color:#1c1c1c;letter-spacing:-0.071px;">Viewport</div>
</div>
</div>
</body>
</html>
